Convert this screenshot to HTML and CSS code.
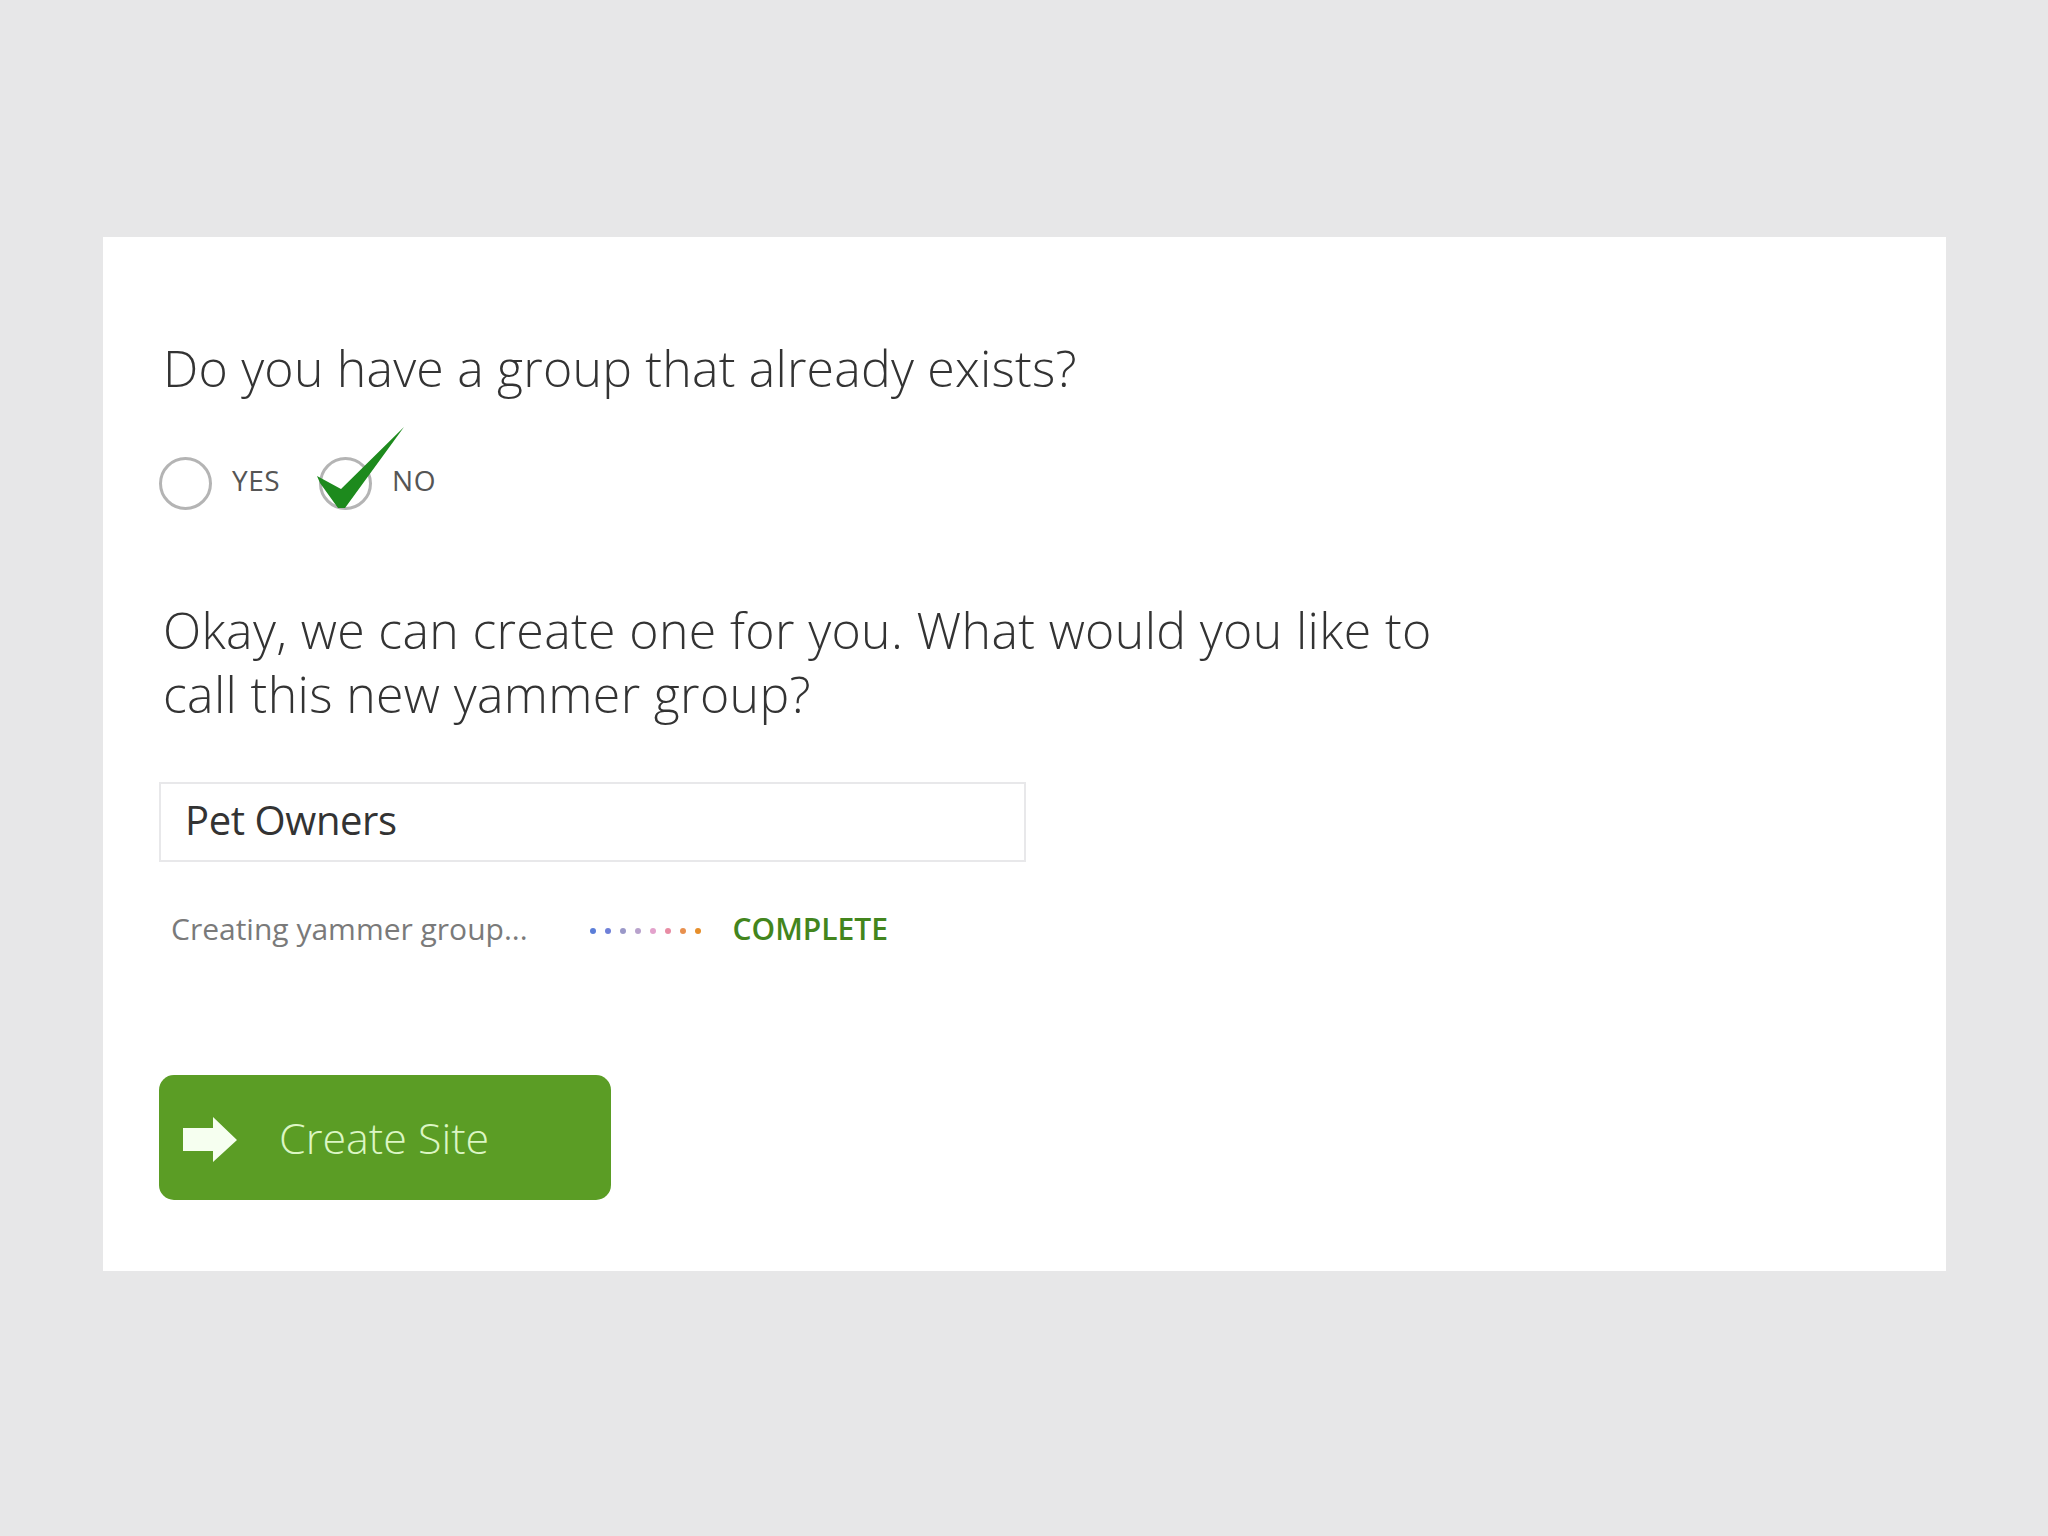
FILE: index.html
```html
<!DOCTYPE html>
<html lang="en">
<head>
<meta charset="utf-8">
<title>Create Site</title>
<link rel="stylesheet" href="styles.css">
</head>
<body>
<main class="card">
  <h1 class="question">Do you have a group that already exists?</h1>
  <div class="choices">
    <div class="choice">
      <span class="radio"></span>
      <span class="choice-label">YES</span>
    </div>
    <div class="choice">
      <span class="radio checked">
        <svg class="check" width="96" height="90" viewBox="0 0 96 90" aria-hidden="true">
          <polygon points="4,53 28,66 91,4 32,85 25,85 7,60" fill="#1d8a1d"/>
        </svg>
      </span>
      <span class="choice-label">NO</span>
    </div>
  </div>
  <p class="prompt">Okay, we can create one for you. What would you like to<br>call this new yammer group?</p>
  <div class="name-field">Pet Owners</div>
  <div class="status">
    <span class="status-text">Creating yammer group...</span>
    <span class="dots">
      <i style="background:#5b7ed8"></i><i style="background:#6f80d8"></i><i style="background:#9a98c8"></i><i style="background:#b8a2cc"></i><i style="background:#e3a2cc"></i><i style="background:#e88ca4"></i><i style="background:#e8904e"></i><i style="background:#e68e2a"></i>
    </span>
    <span class="status-done">COMPLETE</span>
  </div>
  <button class="create-btn" type="button">
    <svg class="arrow" width="54" height="45" viewBox="0 0 54 45" aria-hidden="true">
      <polygon points="0,11 30,11 30,0 54,23 30,45 30,34 0,34" fill="#f6fff0"/>
    </svg>
    <span class="btn-label">Create Site</span>
  </button>
</main>
</body>
</html>
```
FILE: styles.css
```css
html, body {
  margin: 0;
  padding: 0;
}
body {
  background: #e7e7e8;
  font-family: "Open Sans", "Noto Sans", sans-serif;
  color: #333;
  padding: 237px 0 0 103px;
  min-height: 1536px;
  box-sizing: border-box;
}
.card {
  width: 1843px;
  height: 1034px;
  background: #fff;
  box-sizing: border-box;
  padding: 99px 0 0 56px;
}
.question {
  margin: 0;
  font-weight: 300;
  font-size: 50px;
  line-height: 64px;
  color: #333;
  letter-spacing: 0.2px;
  padding-left: 4px;
}
.choices {
  display: flex;
  align-items: center;
  margin-top: 57px;
  margin-left: 0;
  height: 53px;
}
.choice {
  display: flex;
  align-items: center;
}
.choice + .choice {
  margin-left: 39px;
}
.radio {
  position: relative;
  width: 53px;
  height: 53px;
  box-sizing: border-box;
  border: 3px solid #b4b4b4;
  border-radius: 50%;
  flex: none;
}
.check {
  position: absolute;
  left: -9px;
  top: -37px;
}
.choice-label {
  margin-left: 20px;
  margin-bottom: 8px;
  font-size: 28px;
  line-height: 40px;
  color: #555;
  letter-spacing: 0.5px;
}
.prompt {
  margin: 88px 0 0;
  font-weight: 300;
  font-size: 50px;
  line-height: 64px;
  color: #333;
  letter-spacing: 0.35px;
  padding-left: 4px;
}
.name-field {
  margin-top: 56px;
  width: 867px;
  height: 80px;
  box-sizing: border-box;
  border: 2px solid #e8e8ea;
  padding: 0 0 4px 24px;
  font-size: 40px;
  line-height: 72px;
  color: #333;
  letter-spacing: -0.4px;
}
.status {
  margin-top: 46px;
  display: flex;
  align-items: center;
  height: 40px;
  padding-left: 12px;
}
.status-text {
  font-size: 30px;
  color: #7a7a7a;
  letter-spacing: 0;
}
.dots {
  display: flex;
  gap: 9px;
  margin-left: 62px;
  margin-top: 6px;
}
.dots i {
  display: block;
  width: 6px;
  height: 6px;
  border-radius: 50%;
}
.status-done {
  margin-left: 32px;
  font-size: 30px;
  font-weight: 600;
  color: #43851d;
  letter-spacing: 0;
}
.create-btn {
  margin-top: 127px;
  margin-left: 0;
  width: 452px;
  height: 125px;
  border: none;
  border-radius: 15px;
  background: #5b9d25;
  display: flex;
  align-items: center;
  padding: 0 0 0 24px;
  cursor: pointer;
  font-family: inherit;
}
.arrow {
  flex: none;
  margin-top: 4px;
}
.btn-label {
  margin-left: 42px;
  font-size: 43px;
  font-weight: 300;
  color: #dcf6c4;
  letter-spacing: 0;
}
```
